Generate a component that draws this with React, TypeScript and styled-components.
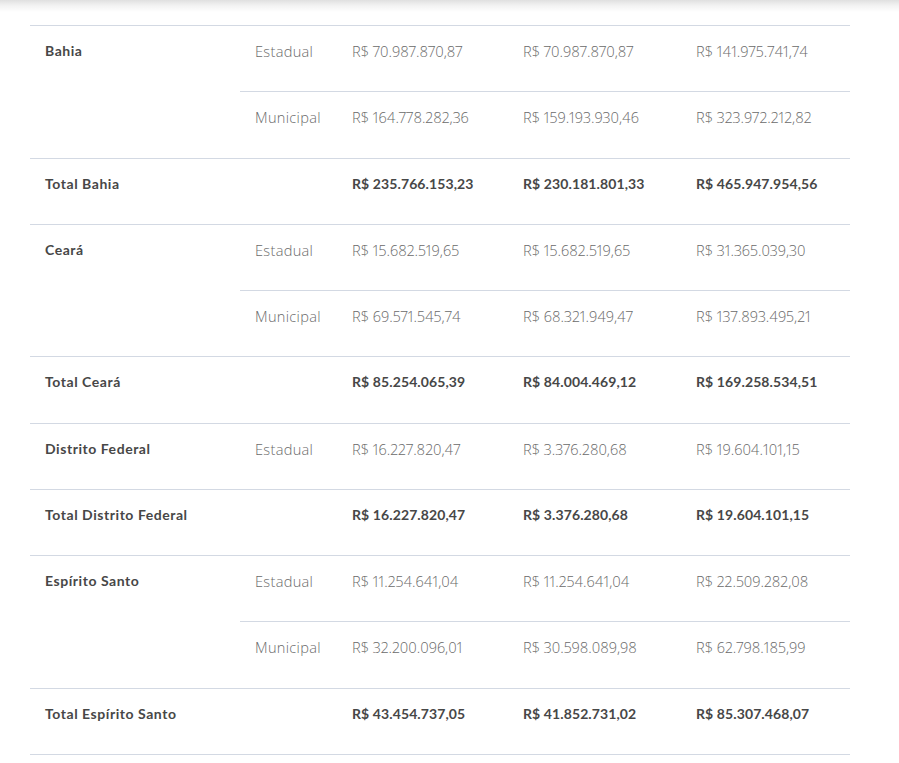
import React from "react";
import styled, { createGlobalStyle, css } from "styled-components";

const Global = createGlobalStyle`
  html, body { margin: 0; padding: 0; background: #fff; }
  body { font-family: "Open Sans", "Lato", sans-serif; }
`;

const TopShade = styled.div`
  height: 12px;
  background: linear-gradient(to bottom, #e0e0e0 0%, #f2f2f2 45%, #ffffff 100%);
`;

const Wrap = styled.div`
  padding: 13px 49px 0 30px;
`;

const Table = styled.table`
  width: 820px;
  border-collapse: collapse;
  table-layout: fixed;
  border-bottom: 1px solid #d3d9e3;
`;

const Col = styled.col<{ $w: number }>`
  width: ${(p) => p.$w}px;
`;

type Variant = "label" | "kind" | "value" | "total";

const Cell = styled.td<{ $v?: Variant }>`
  height: 66.27px;
  padding: 15px 0 0 15px;
  box-sizing: border-box;
  vertical-align: top;
  border-top: 1px solid #d3d9e3;
  line-height: 20px;
  white-space: nowrap;
  ${(p) =>
    p.$v === "label"
      ? css`
          font-family: "Lato", sans-serif;
          font-size: 14px;
          font-weight: 700;
          letter-spacing: 0.55px;
          color: #474747;
        `
      : p.$v === "total"
      ? css`
          font-family: "Lato", sans-serif;
          font-size: 14px;
          font-weight: 700;
          letter-spacing: 0.1px;
          color: #474747;
        `
      : p.$v === "kind"
      ? css`
          font-family: "Open Sans", sans-serif;
          font-size: 14.6px;
          font-weight: 300;
          letter-spacing: 0.3px;
          color: #6a6a6a;
        `
      : css`
          font-family: "Open Sans", sans-serif;
          font-size: 14.6px;
          font-weight: 300;
          letter-spacing: 0;
          font-variant-numeric: proportional-nums;
          color: #6a6a6a;
        `}
`;

type Row = { state?: string; span?: number; kind?: string; vals: string[]; total?: boolean };

const rows: Row[] = [
  { state: "Bahia", span: 2, kind: "Estadual", vals: ["R$ 70.987.870,87", "R$ 70.987.870,87", "R$ 141.975.741,74"] },
  { kind: "Municipal", vals: ["R$ 164.778.282,36", "R$ 159.193.930,46", "R$ 323.972.212,82"] },
  { state: "Total Bahia", total: true, vals: ["R$ 235.766.153,23", "R$ 230.181.801,33", "R$ 465.947.954,56"] },
  { state: "Ceará", span: 2, kind: "Estadual", vals: ["R$ 15.682.519,65", "R$ 15.682.519,65", "R$ 31.365.039,30"] },
  { kind: "Municipal", vals: ["R$ 69.571.545,74", "R$ 68.321.949,47", "R$ 137.893.495,21"] },
  { state: "Total Ceará", total: true, vals: ["R$ 85.254.065,39", "R$ 84.004.469,12", "R$ 169.258.534,51"] },
  { state: "Distrito Federal", span: 1, kind: "Estadual", vals: ["R$ 16.227.820,47", "R$ 3.376.280,68", "R$ 19.604.101,15"] },
  { state: "Total Distrito Federal", total: true, vals: ["R$ 16.227.820,47", "R$ 3.376.280,68", "R$ 19.604.101,15"] },
  { state: "Espírito Santo", span: 2, kind: "Estadual", vals: ["R$ 11.254.641,04", "R$ 11.254.641,04", "R$ 22.509.282,08"] },
  { kind: "Municipal", vals: ["R$ 32.200.096,01", "R$ 30.598.089,98", "R$ 62.798.185,99"] },
  { state: "Total Espírito Santo", total: true, vals: ["R$ 43.454.737,05", "R$ 41.852.731,02", "R$ 85.307.468,07"] },
];

const widths = [210, 97, 171, 173, 169];

export default function App() {
  return (
    <>
      <Global />
      <TopShade />
      <Wrap>
        <Table>
          <colgroup>
            {widths.map((w, i) => (
              <Col key={i} $w={w} />
            ))}
          </colgroup>
          <tbody>
            {rows.map((r, i) => (
              <tr key={i}>
                {r.state && (
                  <Cell $v="label" rowSpan={r.span ?? 1}>
                    {r.state}
                  </Cell>
                )}
                {r.total ? <Cell /> : <Cell $v="kind">{r.kind}</Cell>}
                {r.vals.map((v, j) => (
                  <Cell key={j} $v={r.total ? "total" : "value"}>
                    {v}
                  </Cell>
                ))}
              </tr>
            ))}
          </tbody>
        </Table>
      </Wrap>
    </>
  );
}
